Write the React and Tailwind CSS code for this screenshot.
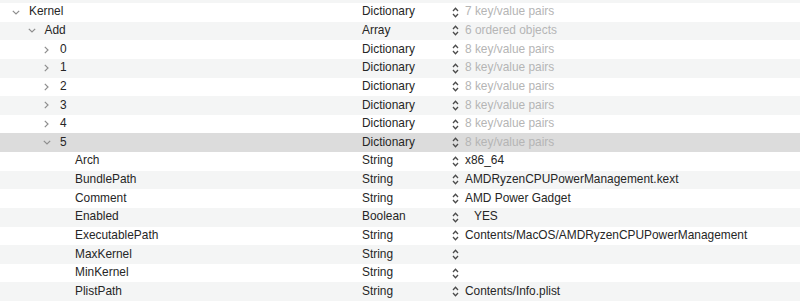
import React from "react";

const rows = [
  { key: "Kernel", level: 0, open: true, type: "Dictionary", value: "7 key/value pairs", dim: true },
  { key: "Add", level: 1, open: true, type: "Array", value: "6 ordered objects", dim: true },
  { key: "0", level: 2, open: false, type: "Dictionary", value: "8 key/value pairs", dim: true },
  { key: "1", level: 2, open: false, type: "Dictionary", value: "8 key/value pairs", dim: true },
  { key: "2", level: 2, open: false, type: "Dictionary", value: "8 key/value pairs", dim: true },
  { key: "3", level: 2, open: false, type: "Dictionary", value: "8 key/value pairs", dim: true },
  { key: "4", level: 2, open: false, type: "Dictionary", value: "8 key/value pairs", dim: true },
  { key: "5", level: 2, open: true, type: "Dictionary", value: "8 key/value pairs", dim: true, selected: true },
  { key: "Arch", level: 3, type: "String", value: "x86_64" },
  { key: "BundlePath", level: 3, type: "String", value: "AMDRyzenCPUPowerManagement.kext" },
  { key: "Comment", level: 3, type: "String", value: "AMD Power Gadget" },
  { key: "Enabled", level: 3, type: "Boolean", value: "YES", bool: true },
  { key: "ExecutablePath", level: 3, type: "String", value: "Contents/MacOS/AMDRyzenCPUPowerManagement" },
  { key: "MaxKernel", level: 3, type: "String", value: "" },
  { key: "MinKernel", level: 3, type: "String", value: "" },
  { key: "PlistPath", level: 3, type: "String", value: "Contents/Info.plist" },
];

// 15.5px per nesting level
const indent = ["pl-[12px]", "pl-[27.5px]", "pl-[43px]", "pl-[58px]"];

const Disclosure = ({ open }) =>
  open ? (
    <svg width="8" height="5" viewBox="0 0 8 5">
      <path d="M0.8 0.8 L4 4 L7.2 0.8" fill="none" stroke="#8e8e8e" strokeWidth="1.2" />
    </svg>
  ) : (
    <svg width="5" height="8" viewBox="0 0 5 8" className="ml-[1px]">
      <path d="M0.8 0.8 L4 4 L0.8 7.2" fill="none" stroke="#8e8e8e" strokeWidth="1.2" />
    </svg>
  );

const UpDown = () => (
  <svg width="7" height="11" viewBox="0 0 7 11">
    <path d="M1 4 L3.5 1.3 L6 4" fill="none" stroke="#4b4b4b" strokeWidth="1.3" />
    <path d="M1 7 L3.5 9.7 L6 7" fill="none" stroke="#4b4b4b" strokeWidth="1.3" />
  </svg>
);

export default function App() {
  return (
    <div
      className="w-[800px] h-[301px] overflow-hidden bg-white text-[11.9px] text-[#262626]"
      style={{ fontFamily: '"Liberation Sans", Arial, sans-serif' }}
    >
      <div className="h-[3px] bg-[#f4f5f5]" />
      {rows.map((row, i) => (
        <div
          key={i}
          className={`flex items-center h-[18.625px] ${
            row.selected ? "bg-[#dcdcdc]" : i % 2 === 1 ? "bg-[#f4f5f5]" : "bg-white"
          }`}
        >
          <div className={`w-[362px] flex items-center ${indent[row.level]}`}>
            <div className="w-[17px] flex items-center">
              {row.open !== undefined && <Disclosure open={row.open} />}
            </div>
            <span>{row.key}</span>
          </div>
          <div className="w-[90px]">{row.type}</div>
          <div className="flex items-center">
            <UpDown />
            <span
              className={`ml-[6px] ${row.dim ? "text-[#b5b5b5]" : ""} ${row.bool ? "pl-[9px]" : ""}`}
            >
              {row.value}
            </span>
          </div>
        </div>
      ))}
    </div>
  );
}
